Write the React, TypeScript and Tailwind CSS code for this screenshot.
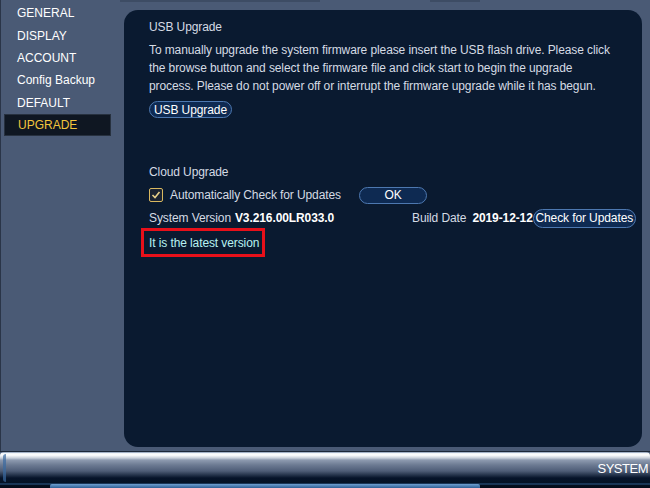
import React from "react";

const items = ["GENERAL", "DISPLAY", "ACCOUNT", "Config Backup", "DEFAULT", "UPGRADE"];

function Pill({ children, className }: { children: React.ReactNode; className?: string }) {
  return (
    <div
      className={
        "flex flex-none items-center justify-center whitespace-nowrap rounded-full border border-[#4d78b0] bg-[#0e2a52] text-white text-[12px] tracking-[-0.1px] leading-none " +
        (className || "")
      }
    >
      {children}
    </div>
  );
}

export default function App() {
  return (
    <div
      className="w-[650px] h-[488px] bg-[#4a5a75] flex flex-col overflow-hidden relative"
      style={{ fontFamily: '"Liberation Sans", Arial, sans-serif' }}
    >
      <div className="absolute left-0 top-0 w-[1px] h-[452px] bg-[#2a3548]" />
      <div className="h-[2px] flex">
        <div className="ml-[120px] w-[200px] h-[2px] bg-[#3d4c64]" />
        <div className="ml-[110px] w-[50px] h-[2px] bg-[#3d4c64]" />
      </div>
      <div className="flex h-[449px]">
        {/* Sidebar */}
        <div className="w-[124px] flex flex-col">
          {items.map((it) => {
            const sel = it === "UPGRADE";
            return (
              <div
                key={it}
                className={
                  "h-[22.4px] flex items-center text-[12px] whitespace-nowrap " +
                  (sel
                    ? "ml-[4px] w-[107px] pl-[13px] bg-[#0f1722] border border-[#27313f] text-[#f2c53d]"
                    : "pl-[17px] text-white")
                }
              >
                {it}
              </div>
            );
          })}
        </div>
        {/* Panel */}
        <div className="mt-[8px] w-[518px] h-[437px] rounded-[14px] bg-[#0a1a30] pl-[25px] pr-[8px] pt-[8px] text-[#d5dbe4] text-[12px] tracking-[-0.1px]">
          <div className="h-[18px] flex items-center">USB Upgrade</div>
          <div className="mt-[5px] leading-[18px] whitespace-nowrap">
            <div>To manually upgrade the system firmware please insert the USB flash drive. Please click</div>
            <div>the browse button and select the firmware file and click start to begin the upgrade</div>
            <div>process. Please do not power off or interrupt the firmware upgrade while it has begun.</div>
          </div>
          <Pill className="mt-[6px] w-[83px] h-[17px]">USB Upgrade</Pill>

          <div className="mt-[45px] h-[18px] flex items-center">Cloud Upgrade</div>
          <div className="mt-[5px] flex items-center h-[18px]">
            <div className="w-[210px] flex items-center flex-none">
              <div className="w-[14px] h-[14px] rounded-[2px] border border-[#d9b860] bg-[#1a2332] flex items-center justify-center">
                <svg width="10" height="10" viewBox="0 0 10 10">
                  <path d="M1.5 5 L4 7.5 L8.5 2" stroke="#e8d08a" strokeWidth="1.6" fill="none" />
                </svg>
              </div>
              <span className="ml-[7px] whitespace-nowrap">Automatically Check for Updates</span>
            </div>
            <Pill className="w-[68px] h-[17px]">OK</Pill>
          </div>
          <div className="mt-[4px] flex items-center h-[20px] whitespace-nowrap">
            <div className="w-[263px] flex-none flex items-center">
              <span>System Version</span>
              <span className="ml-[4px] font-bold text-white">V3.216.00LR033.0</span>
            </div>
            <span>Build Date</span>
            <span className="ml-[6px] font-bold text-white">2019-12-12</span>
            <Pill className="ml-[0px] w-[103px] h-[19px]">Check for Updates</Pill>
          </div>
          <div className="mt-[0px] -ml-[8px] w-[124px] h-[29px] border-[3px] border-[#e8101a] flex items-center pl-[5px] text-[#b8f2f2] whitespace-nowrap">
            It is the latest version
          </div>
        </div>
      </div>
      {/* Bottom bar */}
      <div className="relative h-[37px] border-t border-[#1d2738]">
        <div
          className="absolute inset-0 rounded-t-[4px]"
          style={{
            background:
              "linear-gradient(to bottom, #5a7398 0px, #eef1f6 1px, #ffffff 3px, #c9d0db 6px, #8e9bb0 8px, #6c7a92 13px, #4e5d77 19px, #24334b 23px, #06142a 26px, #031225 31px, #2e5a8a 32px, #041020 33px, #020a16 37px)",
          }}
        />
        <div className="absolute left-[3px] top-[2px] w-[3px] h-[28px] bg-[#3b6aa0] opacity-70 rounded-l" />
        <div className="absolute left-[50px] w-[430px] bottom-0 h-[4px] bg-[linear-gradient(to_bottom,#6fa0d0,#2d5f95)] rounded-t-[2px]" />
        <div className="absolute right-[2px] top-[10px] text-white text-[13px] leading-none tracking-[-0.5px]">SYSTEM</div>
      </div>
    </div>
  );
}
